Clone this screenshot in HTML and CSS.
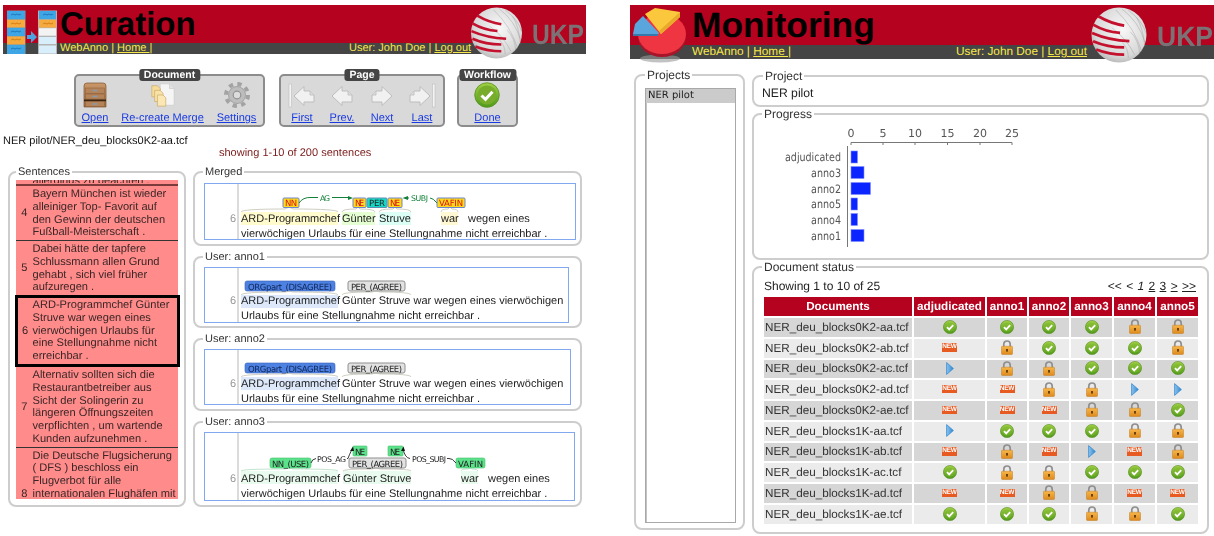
FILE: index.html
```html
<!DOCTYPE html>
<html lang="en">
<head>
<meta charset="utf-8">
<title>WebAnno Curation and Monitoring</title>
<link rel="stylesheet" href="styles.css">
</head>
<body>
<svg class="defs" width="0" height="0" aria-hidden="true">
  <defs>
    <radialGradient id="gSphere" cx=".55" cy=".4" r=".75">
      <stop offset="0" stop-color="#f8f8f8"/><stop offset=".65" stop-color="#d8d8d8"/><stop offset="1" stop-color="#9a9a9a"/>
    </radialGradient>
    <linearGradient id="gOk" x1="0" y1="0" x2="0" y2="1"><stop offset="0" stop-color="#9fd045"/><stop offset="1" stop-color="#4f9a1c"/></linearGradient>
    <linearGradient id="gLock" x1="0" y1="0" x2="0" y2="1"><stop offset="0" stop-color="#f7b648"/><stop offset="1" stop-color="#de8a1e"/></linearGradient>
    <linearGradient id="gPlay" x1="0" y1="0" x2="1" y2="0"><stop offset="0" stop-color="#8cc4ee"/><stop offset="1" stop-color="#2f86cf"/></linearGradient>
    <linearGradient id="gWood" x1="0" y1="0" x2="0" y2="1"><stop offset="0" stop-color="#c9976a"/><stop offset="1" stop-color="#a06c42"/></linearGradient>
    <symbol id="ok" viewBox="0 0 14 14">
      <circle cx="7" cy="7" r="6.6" fill="url(#gOk)" stroke="#5b8f22" stroke-width=".6"/>
      <circle cx="7" cy="7" r="4.6" fill="#7fb52e" opacity=".5"/>
      <path d="M4 7.2 6.2 9.4 10.2 5.2" fill="none" stroke="#fff" stroke-width="1.8"/>
    </symbol>
    <symbol id="lock" viewBox="0 0 12 15">
      <path d="M2.8 7V4.2a3.2 3.2 0 0 1 6.4 0V7" fill="none" stroke="#8f8f8f" stroke-width="1.7"/>
      <rect x=".5" y="6.2" width="11" height="8.3" rx=".8" fill="url(#gLock)" stroke="#c27c20" stroke-width=".5"/>
      <rect x="5" y="9" width="2" height="2.6" fill="#6b4210"/>
    </symbol>
    <symbol id="play" viewBox="0 0 8 13">
      <path d="M.6.6 7.4 6.5.6 12.4Z" fill="url(#gPlay)" stroke="#3a8bd0" stroke-width=".8"/>
    </symbol>
    <symbol id="globe" viewBox="0 0 54 54">
      <circle cx="27" cy="27" r="26.5" fill="url(#gSphere)"/>
      <g fill="none" stroke="#8e8e8e" stroke-width=".6" opacity=".6">
        <path d="M30 2Q46 14 52 34M36 3Q50 14 53 25M24 3Q42 20 49 43M42 46Q34 30 20 20M36 49Q36 40 30 34M44 10Q50 20 52 38M38 24Q46 32 47 45"/>
      </g>
      <g fill="none" stroke="#c3112e" stroke-width="2.7">
        <path d="M7 9Q19 16 32 18"/>
        <path d="M2 17Q14 24 28 25"/>
        <path d="M1 25Q17 32 37 33"/>
        <path d="M2 33Q16 39 32 39"/>
        <path d="M5 41Q18 46 32 46"/>
      </g>
    </symbol>
    <symbol id="arrow-left" viewBox="0 0 22 22">
      <path d="M1 11 11 1.5V6H17L21 10V17H11V20.5Z" fill="#f1f1f1" stroke="#bdbdbd" stroke-width="1"/>
      <path d="M17 6V10H21" fill="#dcdcdc" stroke="#bdbdbd" stroke-width=".8"/>
    </symbol>
    <symbol id="arrow-right" viewBox="0 0 22 22">
      <path d="M21 11 11 1.5V6H5L1 10V17H11V20.5Z" fill="#f1f1f1" stroke="#bdbdbd" stroke-width="1"/>
      <path d="M5 6V10H1" fill="#dcdcdc" stroke="#bdbdbd" stroke-width=".8"/>
    </symbol>
  </defs>
</svg>

<div class="page">
  <section class="screen screen-left">
    <header class="head">
      <svg class="logo-flow" viewBox="0 0 50 44" aria-hidden="true">
        <rect x="-.5" y=".5" width="19" height="44" fill="#8a97a5"/>
        <rect x="0" y="1" width="18" height="8.4" fill="#3fa6e6"/><rect x="0" y="9.6" width="18" height="8" fill="#f6a93c"/>
        <rect x="0" y="17.8" width="18" height="8.4" fill="#3fa6e6"/><rect x="0" y="26.4" width="18" height="8" fill="#f6a93c"/>
        <rect x="0" y="35" width="18" height="9" fill="#3fa6e6"/>
        <path d="M4 5l2-1 2 1 2-1 2 1 2-1M4 22l2-1 2 1 2-1 2 1 2-1M4 39l2-1 2 1 2-1 2 1 2-1" fill="none" stroke="#1b6fb5" stroke-width=".9"/>
        <path d="M4 14l2-1 2 1 2-1 2 1 2-1M4 30l2-1 2 1 2-1 2 1 2-1" fill="none" stroke="#c97a12" stroke-width=".9"/>
        <path d="M20 25h4v-4l6 6-6 6v-4h-4Z" fill="#4ba3e0"/>
        <rect x="31" y=".5" width="19" height="44" fill="#b4b4b4"/>
        <rect x="32" y="1" width="17" height="8.400" fill="#3fa6e6"/><rect x="32" y="9.600" width="17" height="8" fill="#f6a93c"/>
        <rect x="32" y="18.200" width="17" height="7.500" fill="#f3f3f3"/><rect x="32" y="27" width="17" height="7" fill="#d8eefb"/>
        <rect x="32" y="35.500" width="17" height="8" fill="#d8eefb"/>
        <path d="M36 5l2-1 2 1 2-1 2 1 2-1" fill="none" stroke="#1b6fb5" stroke-width=".9"/>
        <path d="M36 14l2-1 2 1 2-1 2 1 2-1" fill="none" stroke="#c97a12" stroke-width=".9"/>
      </svg>
      <h1 class="title title-left">Curation</h1>
      <nav class="nav nav-l">
        <span class="nav-main">WebAnno | <a href="#">Home </a>|</span>
        <span>User: John Doe | <a href="#">Log out</a></span>
      </nav>
      <svg class="globe globe-l" aria-hidden="true"><use href="#globe"/></svg>
      <svg class="ukp ukp-l" viewBox="0 0 52 24"><text x="0" y="22" textLength="52" lengthAdjust="spacingAndGlyphs">UKP</text></svg>
    </header>

    <div class="toolbar">
      <div class="tool tool-doc">
        <span class="pill">Document</span>
        <a class="act act-open" href="#">
          <svg class="act-ico" viewBox="0 0 26 26" aria-hidden="true">
            <path d="M2 4Q2 1 5 1H21Q24 1 24 4V25H2Z" fill="url(#gWood)" stroke="#80532e" stroke-width=".7"/>
            <rect x="3.500" y="6" width="19" height="5.500" fill="#b4835a" stroke="#8a5c36" stroke-width=".5"/>
            <rect x="3.500" y="12" width="19" height="5" fill="#b4835a" stroke="#8a5c36" stroke-width=".5"/>
            <rect x="2" y="17.500" width="22" height="1.800" fill="#3a2412"/>
            <rect x="3.500" y="19.500" width="19" height="5" fill="#b4835a" stroke="#8a5c36" stroke-width=".5"/>
            <path d="M10.500 8.500h5M10.500 14.500h5M10.500 22h5" stroke="#8a9aa8" stroke-width="1.400"/>
          </svg>
          Open
        </a>
        <a class="act act-merge" href="#">
          <svg class="act-ico" viewBox="0 0 28 26" aria-hidden="true">
            <path d="M11 1H21L26 6V24H11Z" fill="#f5f5f5" stroke="#c9c9c9" stroke-width=".7"/>
            <path d="M21 1V6H26" fill="#e2e2e2" stroke="#c9c9c9" stroke-width=".7"/>
            <path d="M2 3H8L11 6V15H2Z" fill="#f6dc9c" stroke="#c9a560" stroke-width=".7"/>
            <path d="M5 8H11L14 11V20H5Z" fill="#f8e2a8" stroke="#c9a560" stroke-width=".7"/>
            <path d="M8 13H14L17 16V25H8Z" fill="#fae7b4" stroke="#c9a560" stroke-width=".7"/>
          </svg>
          Re-create Merge
        </a>
        <a class="act act-set" href="#">
          <svg class="act-ico" viewBox="0 0 26 26" aria-hidden="true">
            <circle cx="13" cy="13" r="11" fill="none" stroke="#a3a3a3" stroke-width="4" stroke-dasharray="4.300 4.340"/>
            <circle cx="13" cy="13" r="8.500" fill="#bdbdbd" stroke="#989898" stroke-width=".8"/>
            <circle cx="13" cy="13" r="3.800" fill="#dcdcdc" stroke="#929292" stroke-width="1.200"/>
          </svg>
          Settings
        </a>
      </div>
      <div class="tool tool-page">
        <span class="pill">Page</span>
        <a class="act act-page" href="#">
          <svg class="act-ico" viewBox="0 0 26 26" aria-hidden="true"><rect x="0" y="2" width="2.500" height="23" fill="#f4f4f4" stroke="#bdbdbd" stroke-width=".6"/><use href="#arrow-left" x="4" y="3" width="22" height="22"/></svg>
          First
        </a>
        <a class="act act-page" href="#">
          <svg class="act-ico" viewBox="0 0 26 26" aria-hidden="true"><use href="#arrow-left" x="2" y="3" width="22" height="22"/></svg>
          Prev.
        </a>
        <a class="act act-page" href="#">
          <svg class="act-ico" viewBox="0 0 26 26" aria-hidden="true"><use href="#arrow-right" x="2" y="3" width="22" height="22"/></svg>
          Next
        </a>
        <a class="act act-page" href="#">
          <svg class="act-ico" viewBox="0 0 26 26" aria-hidden="true"><use href="#arrow-right" x="0" y="3" width="22" height="22"/><rect x="23.500" y="2" width="2.500" height="23" fill="#f4f4f4" stroke="#bdbdbd" stroke-width=".6"/></svg>
          Last
        </a>
      </div>
      <div class="tool tool-work">
        <span class="pill">Workflow</span>
        <a class="act act-done" href="#">
          <svg class="act-ico" viewBox="0 0 26 26" aria-hidden="true">
            <circle cx="13" cy="13" r="12.300" fill="url(#gOk)" stroke="#5b8f22" stroke-width=".8"/>
            <circle cx="13" cy="13" r="9.500" fill="#77ad2a"/>
            <path d="M7.500 13.500 11.500 17.300 18.500 9.800" fill="none" stroke="#fff" stroke-width="3"/>
          </svg>
          Done
        </a>
      </div>
    </div>

    <p class="path">NER pilot/NER_deu_blocks0K2-aa.tcf</p>
    <p class="showing">showing 1-10 of 200 sentences</p>

    <div class="cols">
      <fieldset class="box box-sent">
        <legend>Sentences</legend>
        <div class="sent-list">
          <div class="sent sent-cut"><span class="sent-text">allerdings zu beachten .</span></div>
          <div class="sent sent-line"><span class="num">4</span><span class="sent-text">Bayern München ist wieder<br>alleiniger Top- Favorit auf<br>den Gewinn der deutschen<br>Fußball-Meisterschaft .</span></div>
          <div class="sent"><span class="num">5</span><span class="sent-text">Dabei hätte der tapfere<br>Schlussmann allen Grund<br>gehabt , sich viel früher<br>aufzuregen .</span></div>
          <div class="sent sent-sel"><span class="num">6</span><span class="sent-text">ARD-Programmchef Günter<br>Struve war wegen eines<br>vierwöchigen Urlaubs für<br>eine Stellungnahme nicht<br>erreichbar .</span></div>
          <div class="sent sent-line"><span class="num">7</span><span class="sent-text">Alternativ sollten sich die<br>Restaurantbetreiber aus<br>Sicht der Solingerin zu<br>längeren Öffnungszeiten<br>verpflichten , um wartende<br>Kunden aufzunehmen .</span></div>
          <div class="sent sent-last"><span class="num">8</span><span class="sent-text">Die Deutsche Flugsicherung<br>( DFS ) beschloss ein<br>Flugverbot für alle<br>internationalen Flughäfen mit</span></div>
        </div>
      </fieldset>

      <div class="stack">
        <fieldset class="box box-merged">
          <legend>Merged</legend>
          <svg class="brat brat-merged" viewBox="204 183 372 57" role="img">
            <path class="gutter" d="M238 183V240"/>
            <rect x="241" y="212" width="97" height="13" fill="#fffbcc"/>
            <rect x="342" y="212" width="33" height="13" fill="#e6ffd2"/>
            <rect x="379" y="212" width="32" height="13" fill="#dcfff5"/>
            <rect x="441" y="212" width="17" height="13" fill="#fff8d2"/>
            <path class="brace" d="M241 212Q241 209 285 209L289 207 293 209Q338 209 338 212M342 212Q342 209 356 209L358 207 360 209Q375 209 375 212M379 212Q379 209 393 209L395 207 397 209Q411 209 411 212M441 212Q441 209 448 209L450 207 452 209Q458 209 458 212"/>
            <rect class="lab-y" x="283" y="198" width="16" height="9.500" rx="1"/><text class="lt lt-red" x="285" y="206" textLength="12">NN</text>
            <rect class="lab-y" x="353" y="198" width="13" height="9.500" rx="1"/><text class="lt lt-red" x="355" y="206" textLength="9">NE</text>
            <rect class="lab-c" x="367" y="198" width="20" height="9.500" rx="1"/><text class="lt" x="369" y="206" textLength="16">PER</text>
            <rect class="lab-y" x="388" y="198" width="14" height="9.500" rx="1"/><text class="lt lt-red" x="390" y="206" textLength="10">NE</text>
            <rect class="lab-y" x="437" y="198" width="28" height="9.500" rx="1"/><text class="lt lt-red" x="439" y="206" textLength="24">VAFIN</text>
            <path class="arc-g" d="M299 203Q303 197 311 197.500H318M332 197.500H349"/>
            <path class="head-g" d="M353 198 348 196V200Z"/>
            <path class="arc-g" d="M406 198H409M430 198Q433 198 437 203"/>
            <path class="head-g" d="M402.500 198 408 196V200Z"/>
            <text class="arc-t arc-t-g" x="320" y="201" textLength="10">AG</text>
            <text class="arc-t arc-t-g" x="411" y="201" textLength="17">SUBJ</text>
            <text class="ln" x="230" y="222">6</text>
            <text class="w" x="241" y="222">ARD-Programmchef</text><text class="w" x="342" y="222">Günter</text><text class="w" x="379" y="222">Struve</text><text class="w" x="441" y="222">war</text><text class="w" x="468" y="222">wegen eines</text>
            <text class="w" x="241" y="237">vierwöchigen Urlaubs für eine Stellungnahme nicht erreichbar .</text>
          </svg>
        </fieldset>

        <fieldset class="box box-a1">
          <legend>User: anno1</legend>
          <svg class="brat brat-a1" viewBox="204 267 365 56" role="img">
            <path class="gutter" d="M238 267V323"/>
            <rect x="241" y="295" width="97" height="13" fill="#dde9fb"/>
            <rect class="lab-b" x="245" y="281" width="90" height="10" rx="2"/><text class="lt lt-navy" x="248" y="289.500" textLength="84">ORGpart_(DISAGREE)</text>
            <rect class="lab-g" x="348" y="281" width="57" height="10" rx="2"/><text class="lt" x="351" y="289.500" textLength="51">PER_(AGREE)</text>
            <path class="brace" d="M241 295Q241 292 285 292L289 291 293 292Q338 292 338 295M342 295Q342 292 372 292L376 291 380 292Q411 292 411 295"/>
            <text class="ln" x="230" y="304">6</text>
            <text class="w" x="241" y="304">ARD-Programmchef</text><text class="w" x="342" y="304">Günter Struve war wegen eines vierwöchigen</text>
            <text class="w" x="241" y="319">Urlaubs für eine Stellungnahme nicht erreichbar .</text>
          </svg>
        </fieldset>

        <fieldset class="box box-a2">
          <legend>User: anno2</legend>
          <svg class="brat brat-a2" viewBox="204 349 367 56" role="img">
            <path class="gutter" d="M238 349V405"/>
            <rect x="241" y="377" width="97" height="13" fill="#dde9fb"/>
            <rect class="lab-b" x="245" y="363" width="90" height="10" rx="2"/><text class="lt lt-navy" x="248" y="371.500" textLength="84">ORGpart_(DISAGREE)</text>
            <rect class="lab-g" x="348" y="363" width="57" height="10" rx="2"/><text class="lt" x="351" y="371.500" textLength="51">PER_(AGREE)</text>
            <path class="brace" d="M241 377Q241 374 285 374L289 373 293 374Q338 374 338 377M342 377Q342 374 372 374L376 373 380 374Q411 374 411 377"/>
            <text class="ln" x="230" y="387">6</text>
            <text class="w" x="241" y="387">ARD-Programmchef</text><text class="w" x="342" y="387">Günter Struve war wegen eines vierwöchigen</text>
            <text class="w" x="241" y="402">Urlaubs für eine Stellungnahme nicht erreichbar .</text>
          </svg>
        </fieldset>

        <fieldset class="box box-a3">
          <legend>User: anno3</legend>
          <svg class="brat brat-a3" viewBox="204 432 371 69" role="img">
            <path class="gutter" d="M238 432V501"/>
            <rect x="241" y="471" width="97" height="13" fill="#e9fbee"/>
            <rect x="343" y="471" width="68" height="13" fill="#e9fbee"/>
            <rect x="461" y="471" width="17" height="13" fill="#e9fbee"/>
            <path class="brace-g" d="M241 471Q241 469 285 469L289 468 293 469Q338 469 338 471M461 471Q461 469 468 469L470 468 472 469Q478 469 478 471"/>
            <path class="brace" d="M343 471Q343 469 372 469L376 468 380 469Q411 469 411 471"/>
            <rect class="lab-n" x="270" y="458" width="41" height="10" rx="2"/><text class="lt" x="272" y="466.500" textLength="37">NN_(USE)</text>
            <rect class="lab-n" x="353" y="446" width="14" height="10" rx="1"/><text class="lt" x="355" y="454.500" textLength="10">NE</text>
            <rect class="lab-n" x="388" y="446" width="15" height="10" rx="1"/><text class="lt" x="390" y="454.500" textLength="10">NE</text>
            <rect class="lab-g" x="349" y="458" width="57" height="10" rx="2"/><text class="lt" x="352" y="466.500" textLength="51">PER_(AGREE)</text>
            <rect class="lab-n" x="456" y="458" width="29" height="10" rx="2"/><text class="lt" x="458" y="466.500" textLength="25">VAFIN</text>
            <path class="arc-k" d="M311 463Q312 459 316 458.500M347 458.500H348Q351 450 353 449M403 449Q405 458 410 458.500M447 458.500H449Q452 458 456 463"/>
            <path class="head-k" d="M353 446.500 350 451 354 451Z"/>
            <path class="head-k" d="M403.500 446.500 401 451 405 451Z"/>
            <text class="arc-t" x="317" y="461.500" textLength="29">POS_AG</text>
            <text class="arc-t" x="412" y="461.500" textLength="34">POS_SUBJ</text>
            <text class="ln" x="230" y="482">6</text>
            <text class="w" x="241" y="482">ARD-Programmchef</text><text class="w" x="343" y="482">Günter Struve</text><text class="w" x="461" y="482">war</text><text class="w" x="488" y="482">wegen eines</text>
            <text class="w" x="241" y="497">vierwöchigen Urlaubs für eine Stellungnahme nicht erreichbar .</text>
          </svg>
        </fieldset>
      </div>
    </div>
  </section>

  <section class="screen screen-right">
    <header class="head head-r">
      <svg class="logo-pie" viewBox="0 0 55 56" aria-hidden="true">
        <ellipse cx="27" cy="51.500" rx="20" ry="4" fill="#999" opacity=".6"/>
        <ellipse cx="29" cy="30" rx="24" ry="20" fill="#a8152a"/>
        <ellipse cx="29" cy="27" rx="24" ry="20" fill="#ef3442"/>
        <path d="M0 27 2 17 10 9 26 26 25 27.500Z" fill="#5aa6dc"/>
        <path d="M0 27H25V29H0Z" fill="#3779ad"/>
        <path d="M12 7 22 1 47 5V10L28 27Z" fill="#fbc83d"/>
        <path d="M47 5V10L28 27 26 24Z" fill="#e9a92a"/>
      </svg>
      <h1 class="title title-right">Monitoring</h1>
      <nav class="nav nav-r">
        <span class="nav-main">WebAnno | <a href="#">Home </a>|</span>
        <span>User: John Doe | <a href="#">Log out</a></span>
      </nav>
      <svg class="globe globe-r" aria-hidden="true"><use href="#globe"/></svg>
      <svg class="ukp ukp-r" viewBox="0 0 56 24"><text x="0" y="22.500" textLength="56" lengthAdjust="spacingAndGlyphs">UKP</text></svg>
    </header>

    <div class="cols-r">
      <fieldset class="box-r box-projects">
        <legend>Projects</legend>
        <div class="project-list"><div class="project-item">NER pilot</div></div>
      </fieldset>
      <div class="stack-r">
        <fieldset class="box-r box-project">
          <legend>Project</legend>
          <div class="project-name">NER pilot</div>
        </fieldset>
        <fieldset class="box-r box-progress">
          <legend>Progress</legend>
          <svg class="chart" viewBox="770 121 260 130" role="img">
            <path class="axis" d="M851 142.500H1012M851 142.500V145M883 142.500V145M915 142.500V145M947.500 142.500V145M980 142.500V145M1012 142.500V145M847.500 146V247"/>
            <text class="tick" x="851" y="137">0</text><text class="tick" x="883" y="137">5</text><text class="tick" x="915" y="137">10</text><text class="tick" x="947.500" y="137">15</text><text class="tick" x="980" y="137">20</text><text class="tick" x="1012" y="137">25</text>
            <text class="cat" x="841" y="161" textLength="56" lengthAdjust="spacingAndGlyphs">adjudicated</text>
            <text class="cat" x="841" y="177" textLength="30" lengthAdjust="spacingAndGlyphs">anno3</text>
            <text class="cat" x="841" y="193" textLength="30" lengthAdjust="spacingAndGlyphs">anno2</text>
            <text class="cat" x="841" y="208" textLength="30" lengthAdjust="spacingAndGlyphs">anno5</text>
            <text class="cat" x="841" y="224" textLength="30" lengthAdjust="spacingAndGlyphs">anno4</text>
            <text class="cat" x="841" y="240" textLength="30" lengthAdjust="spacingAndGlyphs">anno1</text>
            <rect class="bar" x="851" y="151" width="6.500" height="12"/>
            <rect class="bar" x="851" y="166.500" width="13" height="12"/>
            <rect class="bar" x="851" y="182.500" width="19.500" height="12"/>
            <rect class="bar" x="851" y="198" width="6.500" height="12"/>
            <rect class="bar" x="851" y="213.500" width="6.500" height="12"/>
            <rect class="bar" x="851" y="229.500" width="13" height="12"/>
          </svg>
        </fieldset>
        <fieldset class="box-r box-status">
          <legend>Document status</legend>
          <div class="status-top">
            <span>Showing 1 to 10 of 25</span>
            <span class="pager">&lt;&lt; &lt; <i>1</i> <a href="#">2</a> <a href="#">3</a> <a href="#">&gt;</a> <a href="#">&gt;&gt;</a></span>
          </div>
          <table class="docs">
            <thead>
              <tr><th class="c-doc">Documents</th><th class="c-adj">adjudicated</th><th class="c-a">anno1</th><th class="c-a">anno2</th><th class="c-b">anno3</th><th class="c-b">anno4</th><th class="c-b">anno5</th></tr>
            </thead>
            <tbody>
              <tr><td>NER_deu_blocks0K2-aa.tcf</td><td><svg class="i-ok"><use href="#ok"/></svg></td><td><svg class="i-ok"><use href="#ok"/></svg></td><td><svg class="i-ok"><use href="#ok"/></svg></td><td><svg class="i-ok"><use href="#ok"/></svg></td><td><svg class="i-lock"><use href="#lock"/></svg></td><td><svg class="i-lock"><use href="#lock"/></svg></td></tr>
              <tr><td>NER_deu_blocks0K2-ab.tcf</td><td><span class="i-new">NEW</span></td><td><svg class="i-lock"><use href="#lock"/></svg></td><td><svg class="i-ok"><use href="#ok"/></svg></td><td><svg class="i-ok"><use href="#ok"/></svg></td><td><svg class="i-ok"><use href="#ok"/></svg></td><td><svg class="i-lock"><use href="#lock"/></svg></td></tr>
              <tr><td>NER_deu_blocks0K2-ac.tcf</td><td><svg class="i-play"><use href="#play"/></svg></td><td><svg class="i-lock"><use href="#lock"/></svg></td><td><svg class="i-lock"><use href="#lock"/></svg></td><td><svg class="i-ok"><use href="#ok"/></svg></td><td><svg class="i-ok"><use href="#ok"/></svg></td><td><svg class="i-ok"><use href="#ok"/></svg></td></tr>
              <tr><td>NER_deu_blocks0K2-ad.tcf</td><td><span class="i-new">NEW</span></td><td><span class="i-new">NEW</span></td><td><svg class="i-lock"><use href="#lock"/></svg></td><td><svg class="i-lock"><use href="#lock"/></svg></td><td><svg class="i-play"><use href="#play"/></svg></td><td><svg class="i-play"><use href="#play"/></svg></td></tr>
              <tr><td>NER_deu_blocks0K2-ae.tcf</td><td><span class="i-new">NEW</span></td><td><span class="i-new">NEW</span></td><td><span class="i-new">NEW</span></td><td><svg class="i-lock"><use href="#lock"/></svg></td><td><svg class="i-lock"><use href="#lock"/></svg></td><td><svg class="i-ok"><use href="#ok"/></svg></td></tr>
              <tr><td>NER_deu_blocks1K-aa.tcf</td><td><svg class="i-play"><use href="#play"/></svg></td><td><svg class="i-ok"><use href="#ok"/></svg></td><td><svg class="i-ok"><use href="#ok"/></svg></td><td><svg class="i-ok"><use href="#ok"/></svg></td><td><svg class="i-lock"><use href="#lock"/></svg></td><td><svg class="i-lock"><use href="#lock"/></svg></td></tr>
              <tr><td>NER_deu_blocks1K-ab.tcf</td><td><span class="i-new">NEW</span></td><td><svg class="i-lock"><use href="#lock"/></svg></td><td><span class="i-new">NEW</span></td><td><svg class="i-play"><use href="#play"/></svg></td><td><span class="i-new">NEW</span></td><td><svg class="i-lock"><use href="#lock"/></svg></td></tr>
              <tr><td>NER_deu_blocks1K-ac.tcf</td><td><svg class="i-ok"><use href="#ok"/></svg></td><td><svg class="i-lock"><use href="#lock"/></svg></td><td><svg class="i-lock"><use href="#lock"/></svg></td><td><svg class="i-ok"><use href="#ok"/></svg></td><td><svg class="i-ok"><use href="#ok"/></svg></td><td><svg class="i-ok"><use href="#ok"/></svg></td></tr>
              <tr><td>NER_deu_blocks1K-ad.tcf</td><td><span class="i-new">NEW</span></td><td><span class="i-new">NEW</span></td><td><svg class="i-lock"><use href="#lock"/></svg></td><td><svg class="i-lock"><use href="#lock"/></svg></td><td><span class="i-new">NEW</span></td><td><span class="i-new">NEW</span></td></tr>
              <tr><td>NER_deu_blocks1K-ae.tcf</td><td><svg class="i-ok"><use href="#ok"/></svg></td><td><svg class="i-ok"><use href="#ok"/></svg></td><td><svg class="i-ok"><use href="#ok"/></svg></td><td><svg class="i-lock"><use href="#lock"/></svg></td><td><svg class="i-lock"><use href="#lock"/></svg></td><td><svg class="i-ok"><use href="#ok"/></svg></td></tr>
            </tbody>
          </table>
        </fieldset>
      </div>
    </div>
  </section>
</div>
</body>
</html>
```

FILE: styles.css
```css
* { box-sizing: border-box; }
html, body { margin: 0; padding: 0; background: #fff; }
body { font-family: "Liberation Sans", Arial, sans-serif; color: #222; overflow: hidden; text-rendering: geometricPrecision; }
.defs { position: absolute; }
a { color: inherit; }

.page { width: 1214px; height: 536px; display: flex; align-items: flex-start; filter: blur(.35px); }
.screen { flex: none; }
.screen-left { width: 583px; margin: 5px 44px 0 3px; font-size: 11px; }
.screen-right { width: 584px; margin-top: 5px; font-size: 12px; }

/* header */
.head { position: relative; height: 49px; background: #b5021e; }
.head-r { height: 54px; }
.title { margin: 0; height: 38px; color: #000; font-weight: 700; font-size: 33px; line-height: 38px; padding-left: 57px; }
.title-right { height: 40px; font-size: 35.4px; line-height: 40px; padding-left: 62px; }
.nav { display: flex; height: 11px; background: #454545; color: #f7e94a; line-height: 11px; font-size: 11px; padding-left: 57px; }
.nav-r { height: 14px; line-height: 13px; font-size: 11.8px; padding-left: 62px; }
.nav a { text-decoration: underline; }
.nav-l .nav-main { width: 289px; }
.nav-r .nav-main { width: 264px; }
.logo-flow { position: absolute; left: 4px; top: 5px; width: 50px; height: 44px; }
.logo-pie { position: absolute; left: 3px; top: 2px; width: 55px; height: 56px; }
.globe { position: absolute; }
.globe-l { left: 467px; top: 2px; width: 53px; height: 52px; }
.globe-r { left: 460px; top: 2px; width: 58px; height: 56px; }
.ukp { position: absolute; overflow: visible; }
.ukp-l { left: 529px; top: 17px; width: 52px; height: 24px; }
.ukp-r { left: 527px; top: 18px; width: 56px; height: 24px; }
.ukp text { font: 700 28px "Liberation Sans", sans-serif; fill: #7b7276; }

/* toolbar */
.toolbar { display: flex; align-items: flex-start; margin: 20px 0 0 71px; }
.tool { position: relative; display: flex; height: 53px; padding-top: 6px; background: #d9d9d9; border: 2px solid #8c8c8c; border-radius: 5px; }
.tool-doc { width: 191px; padding-left: 6px; margin-right: 14px; }
.tool-page { width: 166px; padding-left: 1px; margin-right: 12px; }
.tool-work { width: 61px; justify-content: center; }
.pill { position: absolute; top: -7px; left: 50%; transform: translateX(-50%); padding: 0 5px; height: 12px; line-height: 12px; background: #454545; color: #fff; border-radius: 3px; font-size: 10.5px; font-weight: 700; white-space: nowrap; }
.act { display: flex; flex-direction: column; align-items: center; color: #1a3be2; font-size: 11px; line-height: 14px; text-decoration: underline; white-space: nowrap; }
.act-ico { display: block; width: 26px; height: 26px; margin-bottom: 3px; overflow: visible; }
.act-open { width: 26px; }
.act-merge { width: 81px; margin-left: 14px; }
.act-set { width: 39px; margin-left: 14px; }
.act-page { width: 40px; }

.path { margin: 8px 0 0; line-height: 12px; color: #111; }
.showing { margin: 0; line-height: 12px; color: #7b1a1a; padding-left: 216px; }

/* panels */
.box, .box-r { margin: 0; padding: 0; min-width: 0; border: 2px solid #cdcdcd; border-radius: 8px; }
.box legend, .box-r legend { padding: 0 2px; line-height: 14px; }
.box legend { margin-left: -1px; font-size: 11px; color: #333; }
.box-sent legend { margin-left: 2px; }
.box-r legend { margin-left: 0; font-size: 12px; color: #333; }
.box-project legend { margin-left: 1px; }
.box-progress legend { margin-left: -8px; }

.cols { display: flex; margin: 6px 0 0 5px; gap: 7px; }
.box-sent { width: 178px; height: 342px; padding: 1px 0 0 4px; }
.sent-list { width: 166px; height: 319px; padding: 0 2px; overflow: hidden; color: #3a2626; font-size: 11.1px; line-height: 12.75px; }
.sent { display: flex; align-items: center; background: #ff8b8b; padding: 2px 0 1px; }
.sent-line { border-bottom: 1px solid #333; }
.num { width: 16.5px; flex: none; text-align: center; }
.sent-text { display: block; white-space: nowrap; }
.sent-cut { height: 6px; padding: 0 0 0 16.5px; align-items: flex-start; border-bottom: 2px solid #7b3b3b; }
.sent-cut .sent-text { height: 2.5px; line-height: 2.5px; overflow: hidden; }
.sent-sel { border: 3px solid #000; margin: 0 -1.5px; padding: 0; height: 72px; }
.sent-sel .num { width: 15px; }
.sent-last { align-items: flex-end; }

.stack { display: flex; flex-direction: column; gap: 4px; }
.box-merged { width: 389px; height: 81px; padding: 4px 0 0 9px; }
.box-a1 { width: 389px; height: 78px; padding: 3px 0 0 9px; }
.box-a2 { width: 389px; height: 79px; padding: 3px 0 0 9px; }
.box-a3 { width: 389px; height: 92px; padding: 3px 0 0 9px; }
.brat { display: block; outline: 1.5px solid #82a9ef; outline-offset: -1.5px; }
.brat-merged { width: 372px; height: 57px; }
.brat-a1 { width: 365px; height: 56px; }
.brat-a2 { width: 367px; height: 56px; }
.brat-a3 { width: 371px; height: 69px; }
.gutter { stroke: #cfcfcf; stroke-width: 1.500; fill: none; }
.w { font: 11px "Liberation Sans", sans-serif; fill: #1d1d1d; }
.ln { font: 11px "Liberation Sans", sans-serif; fill: #999; }
.lt { font: 8.5px "DejaVu Sans", sans-serif; fill: #222; }
.lt-red { fill: #d4141e; }
.lt-navy { fill: #12265a; }
.lab-y { fill: #ffd91a; stroke: #6f86cc; stroke-width: 1; }
.lab-c { fill: #16d8c6; stroke: #5f8fb0; stroke-width: 1; }
.lab-b { fill: #4d82e2; stroke: #3560b8; stroke-width: .6; }
.lab-g { fill: #e2e2e2; stroke: #8f8f8f; stroke-width: 1; }
.lab-n { fill: #5ce28a; stroke: #3fbf68; stroke-width: .6; }
.brace { fill: none; stroke: #b9b9a8; stroke-width: .7; }
.brace-g { fill: none; stroke: #a6d8b6; stroke-width: .7; }
.arc-g { fill: none; stroke: #128038; stroke-width: 1; }
.head-g { fill: #128038; }
.arc-k { fill: none; stroke: #222; stroke-width: .9; }
.head-k { fill: #111; }
.arc-t { font: 7.800px "DejaVu Sans", sans-serif; fill: #222; }
.arc-t-g { fill: #128038; }

/* monitoring */
.cols-r { display: flex; margin: 9px 0 0 4px; gap: 7px; }
.box-projects { width: 111px; height: 462px; padding: 6px 0 0 9px; }
.project-list { width: 91px; height: 435px; border: 1px solid #a8a8a8; box-shadow: inset 1px 1px 0 #c4c4c4; }
.project-item { height: 14px; padding-left: 2px; background: #cbcbcb; font: 10px/14px "DejaVu Sans", sans-serif; color: #222; }
.stack-r { display: flex; flex-direction: column; margin-top: 1px; }
.box-project { width: 457px; height: 38px; padding: 0 0 0 8px; }
.project-name { font-size: 12.200px; line-height: 16px; color: #222; margin-top: 2px; }
.box-progress { width: 457px; height: 153px; padding: 0 0 0 16px; }
.chart { display: block; width: 260px; height: 130px; }
.axis { fill: none; stroke: #777; stroke-width: 1; }
.tick { font: 11px "DejaVu Sans", sans-serif; fill: #555; text-anchor: middle; }
.cat { font: 11.500px "DejaVu Sans", sans-serif; fill: #555; text-anchor: end; }
.bar { fill: #0a25ff; stroke: #7f90ff; stroke-width: .6; }
.box-status { width: 457px; height: 274px; padding: 5px 0 0 8px; }
.status-top { display: flex; justify-content: space-between; width: 432px; margin-left: 2px; line-height: 15px; font-size: 12px; }
.pager { word-spacing: 1px; }
.docs { border-collapse: separate; border-spacing: 2px; table-layout: fixed; width: 438px; margin-top: 1px; font-size: 11.7px; }
.docs th { height: 19px; padding: 0; background: #b5021e; color: #fff; font-weight: 700; font-size: 11.7px; text-align: center; }
.c-doc { width: 148px; }
.c-adj { width: 71px; }
.c-a { width: 40px; }
.c-b { width: 41px; }
.docs td { height: 18.750px; padding: 0 0 1px; text-align: center; background: #ebebeb; line-height: 0; }
.docs tbody tr:nth-child(odd) td { background: #d6d6d6; }
.docs td:first-child { text-align: left; line-height: 16px; color: #333; padding: 1px 0 0 1px; white-space: nowrap; }
.i-ok { width: 14px; height: 14px; vertical-align: middle; }
.i-lock { width: 12px; height: 15px; vertical-align: middle; }
.i-play { width: 8px; height: 13px; vertical-align: middle; }
.i-new { display: inline-block; width: 15px; height: 8.500px; background: #e75a22; color: #fff; font-size: 6.500px; font-weight: 700; line-height: 8.500px; text-align: center; vertical-align: middle; letter-spacing: -.2px; }
```
